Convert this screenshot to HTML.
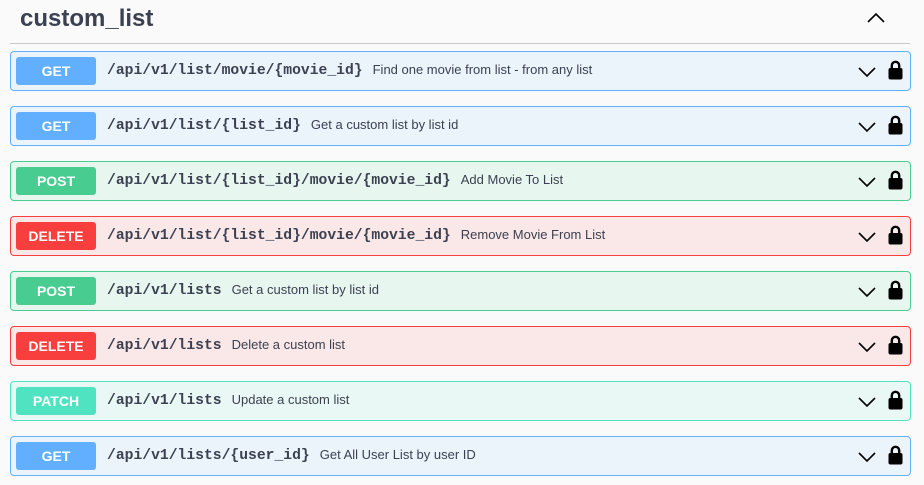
<!DOCTYPE html>
<html><head><style>
body{margin:0;background:#fafafa;width:924px;height:485px;overflow:hidden;font-family:"Liberation Sans",sans-serif;color:#3b4151;position:relative}
h2{position:absolute;left:20px;top:5px;margin:0;font-size:24px;font-weight:bold;color:#3b4151}
.hr{position:absolute;left:10px;width:900px;top:43px;border-top:1px solid #c8c8c8}
.up{position:absolute;left:866px;top:12px}
.op{position:absolute;left:10px;width:899px;height:38px;border:1px solid;border-radius:4px;box-sizing:content-box}
.b{position:absolute;left:5px;top:5px;width:80px;height:28px;border-radius:3px;color:#fff;font-weight:bold;font-size:14px;line-height:28px;text-align:center}
.p{position:absolute;left:96px;top:10px;font-family:"Liberation Mono",monospace;font-weight:bold;font-size:14.7px;color:#3b4151;white-space:nowrap}
.d{font-family:"Liberation Sans",sans-serif;font-weight:normal;font-size:13px;margin-left:10px}
.ch{position:absolute;left:846px;top:14px}
.lk{position:absolute;left:877px;top:8px}
.get{background:#ebf3fb;border-color:#61affe}.get .b{background:#61affe}
.post{background:#e8f6f0;border-color:#49cc90}.post .b{background:#49cc90}
.del{background:#fae7e7;border-color:#f93e3e}.del .b{background:#f93e3e}
.pat{background:#e9f8f5;border-color:#50e3c2}.pat .b{background:#50e3c2}
</style></head><body>
<h2>custom_list</h2>
<svg class="up" width="20" height="12" viewBox="0 0 20 12"><path d="M2 10 L10 2 L18 10" fill="none" stroke="#000" stroke-width="1.6"/></svg>
<div class="hr"></div>
<div id="ops"></div>
<script>
var d=[["get","GET","/api/v1/list/movie/{movie_id}","Find one movie from list - from any list"],
["get","GET","/api/v1/list/{list_id}","Get a custom list by list id"],
["post","POST","/api/v1/list/{list_id}/movie/{movie_id}","Add Movie To List"],
["del","DELETE","/api/v1/list/{list_id}/movie/{movie_id}","Remove Movie From List"],
["post","POST","/api/v1/lists","Get a custom list by list id"],
["del","DELETE","/api/v1/lists","Delete a custom list"],
["pat","PATCH","/api/v1/lists","Update a custom list"],
["get","GET","/api/v1/lists/{user_id}","Get All User List by user ID"]];
var h="";
d.forEach(function(r,i){h+='<div class="op '+r[0]+'" style="top:'+(51+55*i)+'px"><div class="b">'+r[1]+'</div><div class="p">'+r[2]+'<span class="d">'+r[3]+'</span></div><svg class="ch" width="20" height="12" viewBox="0 0 20 12"><path d="M2 2 L10 10 L18 2" fill="none" stroke="#000" stroke-width="1.6"/></svg><svg class="lk" width="15" height="20" viewBox="0 0 15 20"><path d="M3.8 9 V5.5 a3.7 3.7 0 0 1 7.4 0 V9" fill="none" stroke="#000" stroke-width="2.4"/><rect x="0.5" y="8" width="14" height="11.5" rx="2" fill="#000"/></svg></div>';});
document.getElementById("ops").innerHTML=h;
</script>
</body></html>
